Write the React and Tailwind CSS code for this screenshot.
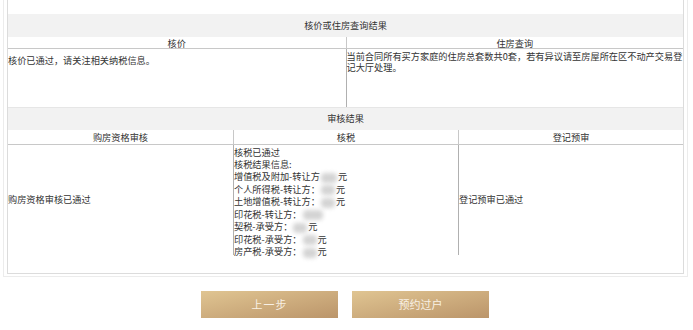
import React from "react";

const Blur = ({ w = 18 }) => (
  <span
    className="inline-block h-[10px] align-middle bg-[#d4d4d4] blur-[2px] rounded-sm mx-[1px]"
    style={{ width: w }}
  />
);

export default function App() {
  const font = { fontFamily: '"Noto Sans CJK SC", "Noto Sans", sans-serif' };
  return (
    <div className="w-[693px] h-[330px] bg-white overflow-hidden text-[#333]" style={font}>
      <div className="ml-[3px] w-[685px] border border-t-0 border-[#ececec] px-[3px] pb-[2px]">
        <div className="border border-t-0 border-[#dcdcdc] pt-[14px] h-[274px]">
          <div className="h-[23px] bg-[#f2f2f2] flex items-center justify-center text-[9.2px]">
            核价或住房查询结果
          </div>
          <div className="grid grid-cols-2 text-[9.2px]">
            <div className="h-[12px] leading-[12px] text-center border-b border-[#c8c8c8]">核价</div>
            <div className="h-[12px] leading-[12px] text-center border-b border-l border-[#c8c8c8]">住房查询</div>
            <div className="h-[58px] pt-[6px] leading-[11px]">核价已通过，请关注相关纳税信息。</div>
            <div className="h-[58px] pt-[2px] leading-[11px] border-l border-[#b0b0b0]">
              当前合同所有买方家庭的住房总套数共0套，若有异议请至房屋所在区不动产交易登记大厅处理。
            </div>
          </div>
          <div className="h-[23px] bg-[#f2f2f2] border-t border-[#e6e6e6] flex items-center justify-center text-[9.2px]">
            审核结果
          </div>
          <div className="grid grid-cols-3 text-[9.2px]">
            <div className="h-[15px] leading-[15px] text-center border-b border-[#c8c8c8]">购房资格审核</div>
            <div className="h-[15px] leading-[15px] text-center border-b border-l border-[#c8c8c8]">核税</div>
            <div className="h-[15px] leading-[15px] text-center border-b border-l border-[#c8c8c8]">登记预审</div>
            <div className="h-[110px] flex items-center">购房资格审核已通过</div>
            <div className="h-[110px] border-l border-[#b0b0b0] leading-[12px] pt-[1px]">
              <div>核税已通过</div>
              <div>核税结果信息:</div>
              <div>增值税及附加-转让方<Blur w={16} />元</div>
              <div>个人所得税-转让方：<Blur w={14} />元</div>
              <div>土地增值税-转让方：<Blur w={14} />元</div>
              <div>印花税-转让方：<Blur w={20} /></div>
              <div>契税-承受方：<Blur w={14} />元</div>
              <div>印花税-承受方：<Blur w={14} />元</div>
              <div>房产税-承受方：<Blur w={14} />元</div>
            </div>
            <div className="h-[110px] border-l border-[#b0b0b0] flex items-center">登记预审已通过</div>
          </div>
        </div>
      </div>
      <div className="mt-[14px] flex justify-center gap-[14px] pr-[3px]">
        <button className="w-[137px] h-[27px] bg-linear-to-br from-[#e0c592] to-[#bb956a] text-[#f8f0e4] text-[11px] tracking-[1px]">
          上一步
        </button>
        <button className="w-[137px] h-[27px] bg-linear-to-br from-[#e0c592] to-[#bb956a] text-[#f8f0e4] text-[11px]">
          预约过户
        </button>
      </div>
    </div>
  );
}
